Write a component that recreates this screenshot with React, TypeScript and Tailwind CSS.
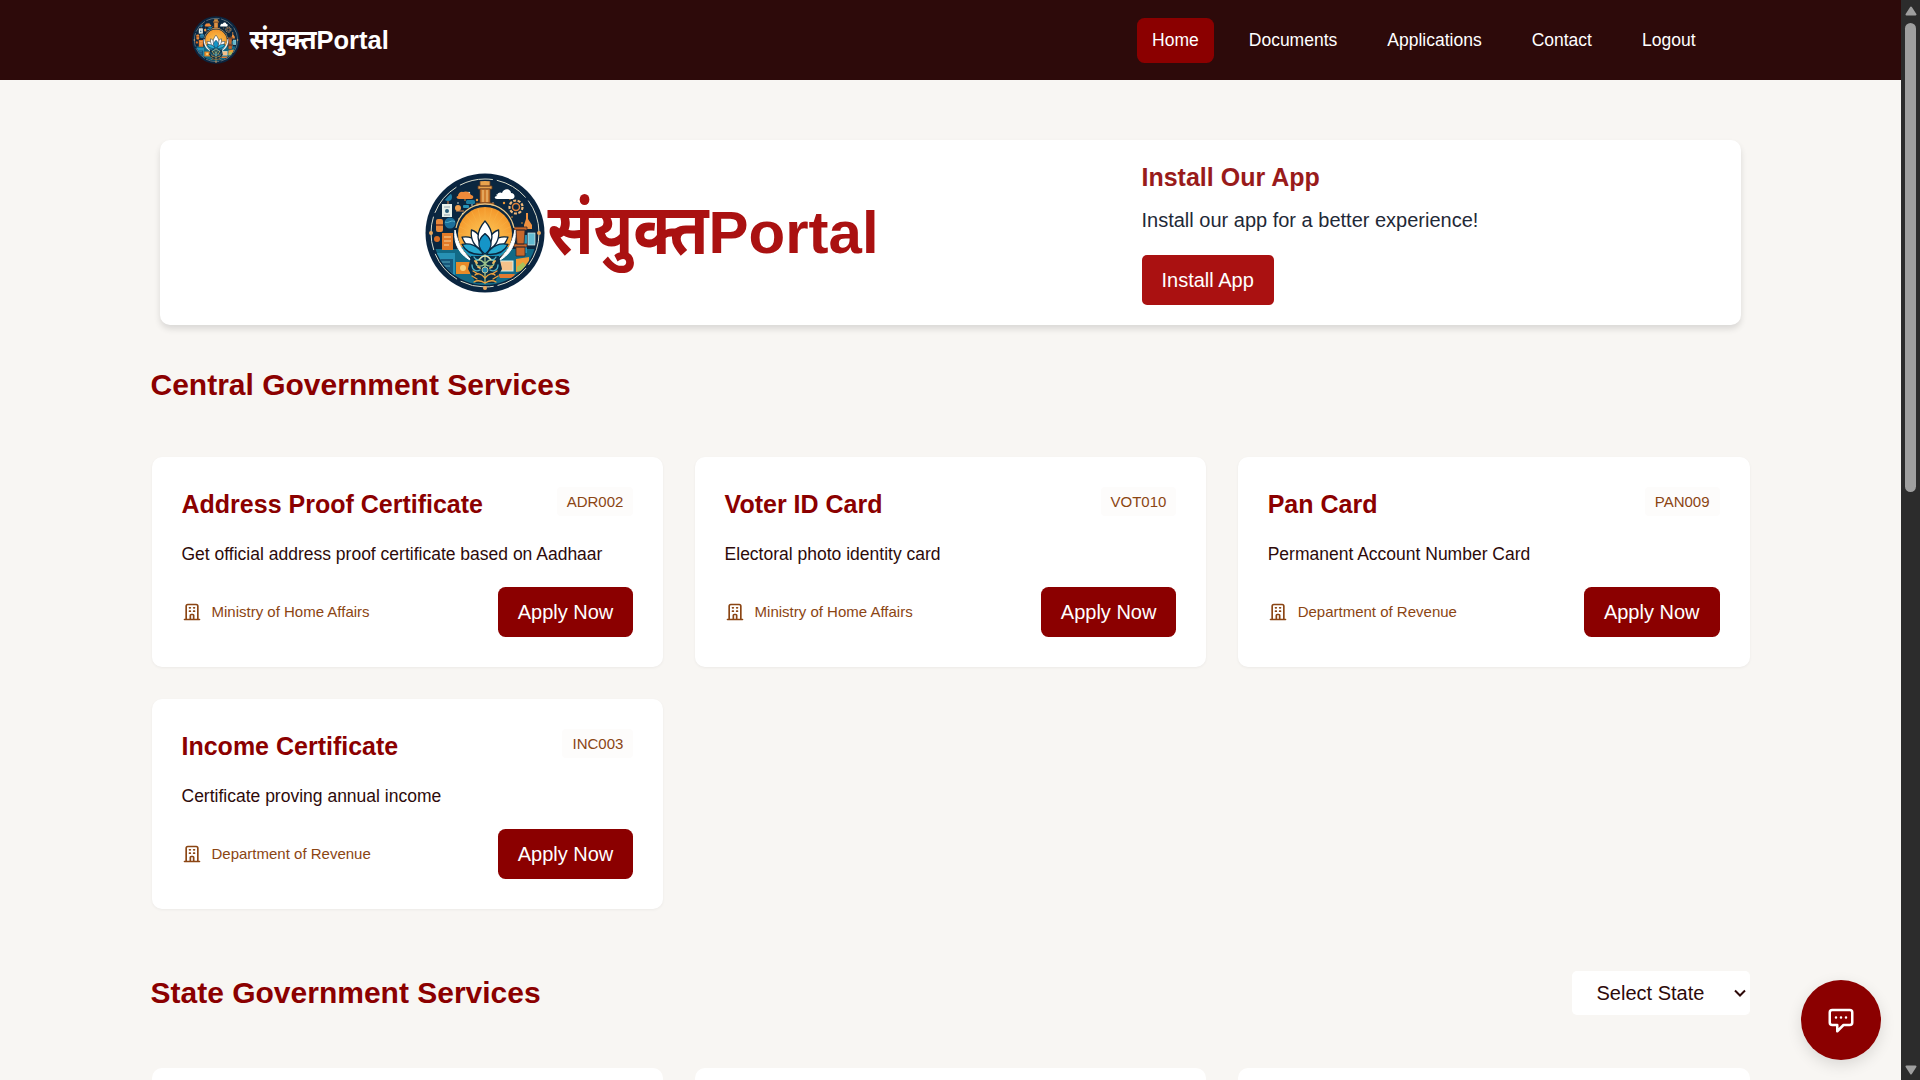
import React from "react";

const FONT = { fontFamily: '"Liberation Sans", "Noto Sans", "Noto Sans Devanagari", sans-serif' };

function Emblem({ size }: { size: number }) {
  const stars = [
    [44, 20], [40, 27], [72, 22], [79, 30], [47, 32], [76, 36], [38, 41], [85, 26], [68, 30], [52, 27], [33, 30], [87, 44], [24, 42], [97, 50], [34, 46], [82, 18],
  ];
  return (
    <svg width={size} height={size} viewBox="0 0 120 120" className="block shrink-0">
      <defs>
        <clipPath id="disc"><circle cx="60" cy="60" r="52" /></clipPath>
        <clipPath id="sun"><circle cx="60" cy="61" r="27" /></clipPath>
        <radialGradient id="glow" cx="0.5" cy="0.6" r="0.7">
          <stop offset="0" stopColor="#ffd060" />
          <stop offset="1" stopColor="#f08418" />
        </radialGradient>
      </defs>
      <circle cx="60" cy="60" r="59.5" fill="#0a2540" />
      <circle cx="60" cy="60" r="54" fill="none" stroke="#d9dccb" strokeWidth="1" strokeDasharray="34 4" />
      <g clipPath="url(#disc)">
        <rect width="120" height="120" fill="#0b2740" />
        <rect y="76" width="120" height="50" fill="#126a86" />
        <path d="M12 80h18v22H12zM92 62h10v18H92z" fill="#2791b4" />
        {stars.map(([x, y], i) => (
          <circle key={i} cx={x} cy={y} r={i % 3 === 0 ? 1.2 : 0.8} fill={i % 2 ? "#f39a35" : "#d8e7de"} />
        ))}
        <path d="M33 23a4 4 0 0 1 5-4 6 6 0 0 1 8 3c3 0 3 4 0 4H34c-3 0-3-3-1-3z" fill="#f08a3a" />
        <path d="M72 23c0-4 4-4 5-3 2-6 9-4 9 0 4 0 5 5 1 6H72c-3 0-3-3 0-3z" fill="#fff" />
        <circle cx="23" cy="24" r="4" fill="#1f7ea6" />
        <path d="M23 28v7M31 38h8" stroke="#d9894d" strokeWidth="1" />
        <rect x="17" y="31" width="10" height="13" fill="#e9f1ea" />
        <circle cx="22" cy="38" r="2" fill="#2b5f7b" />
        <path d="M19 34h6M19 42h6" stroke="#7c93a0" strokeWidth="0.8" />
        <rect x="41" y="27" width="9" height="4" rx="1.5" fill="#1d7ea2" />
        <rect x="38" y="32" width="6" height="3" rx="1" fill="#2894b8" />
        <circle cx="33" cy="35" r="3" fill="#f0a04e" />
        <circle cx="91" cy="34" r="6.5" fill="none" stroke="#f0b878" strokeWidth="2.2" strokeDasharray="3 1.5" />
        <circle cx="91" cy="34" r="3.5" fill="#0b2740" stroke="#e1823a" strokeWidth="1.5" />
        <rect x="11" y="46" width="7" height="13" rx="2" fill="#e9883a" />
        <rect x="11" y="51" width="7" height="2" fill="#9b4b20" />
        <circle cx="25" cy="50" r="5.5" fill="#1d6f9a" />
        <path d="M20 49c4 2 6-3 10 0" fill="none" stroke="#56b4ce" strokeWidth="1" />
        <circle cx="12" cy="66" r="3" fill="#d96b22" />
        <rect x="17" y="60" width="11" height="17" fill="#e37a28" />
        <path d="M19 64h7M19 68h7M19 72h5" stroke="#fbd49a" strokeWidth="1" />
        <path d="M103 40v6l4 6v4h-8v-4l2-6v-6z" fill="#ef9140" />
        <path d="M89 54h13v3H89zM91 57h9l-1 14h-7zM89 71h13v3H89zM91 74h9v9h-9z" fill="#c8682b" stroke="#3a2b2c" strokeWidth="0.8" />
        <rect x="103" y="60" width="7" height="12" fill="#63bcd3" stroke="#d9e8e3" strokeWidth="0.7" />
        <rect x="31" y="89" width="14" height="12" fill="#e88b28" />
        <circle cx="38" cy="95" r="3" fill="#f5d17b" />
        <path d="M14 86h14v16H14z" fill="#17577b" />
        <path d="M17 89h8M17 93h8" stroke="#58a9bd" strokeWidth="1" />
        <rect x="75" y="88" width="13" height="10" fill="#f5c18a" stroke="#d9efe8" strokeWidth="1" />
        <path d="M73 101h17l-2 4H75z" fill="#e27a30" />
        <path d="m91 86 13-2v13l-13 2z" fill="#f19b35" />
        <path d="m92 94 6-5 5 6v2l-11 1z" fill="#a9c15b" />
        <path d="M58 3h4v4h-4zM55 7h10v6H55zM53 13h14v3H53z" fill="#e8a24d" stroke="#6a3c20" strokeWidth="0.8" />
        <path d="M55 16h10v14H55zM51 30h18v4H51z" fill="#cf7d30" stroke="#6a3c20" strokeWidth="0.8" />
        <path d="M58 17v12M62 17v12" stroke="#f7cf86" strokeWidth="1" />
      </g>
      <circle cx="60" cy="61" r="29.500" fill="#0b2740" />
      <path d="M30 57c-2 15 6 26 17 31-8-8-14-16-17-31zM90 57c2 15-6 26-17 31 8-8 14-16 17-31z" fill="#fff" stroke="#fff" strokeWidth="1" />
      <path d="M31 55a29.500 29.500 0 0 1 58 0" fill="none" stroke="#e9c88a" strokeWidth="1.200" />
      <g clipPath="url(#sun)">
        <rect x="30" y="30" width="60" height="60" fill="url(#glow)" />
        {Array.from({ length: 15 }, (_, i) => {
          const a = Math.PI * (1 + i / 14);
          return <path key={i} d={`M60 66L${60 + Math.cos(a) * 32} ${66 + Math.sin(a) * 32}`} stroke="#f8b044" strokeWidth="0.6" />;
        })}
        <path d="M30 74h60v20H30z" fill="#1993bd" />
      </g>
      <g stroke="#0b2740" strokeWidth="1.5" strokeLinejoin="round" transform="translate(9 7.500) scale(0.850 0.900)">
        <path d="M59 78c-13 1-22-5-26-15 6-1 12 0 16 4z" fill="#fff" />
        <path d="M61 78c13 1 22-5 26-15-6-1-12 0-16 4z" fill="#fff" />
        <path d="M58 78c-13-5-15-14-14-23 7 2 13 7 14 23z" fill="#fff" />
        <path d="M62 78c13-5 15-14 14-23-7 2-13 7-14 23z" fill="#fff" />
        <path d="M60 78c-13-12-9-23 0-33 9 10 13 21 0 33z" fill="#fff" />
        <path d="M60 82c-10-8-9-16 0-23 9 7 10 15 0 23z" fill="#1595c8" />
        <path d="M58 82c-12 1-21-3-25-11 9-2 19 1 25 11z" fill="#28aad1" />
        <path d="M62 82c12 1 21-3 25-11-9-2-19 1-25 11z" fill="#28aad1" />
      </g>
      <path d="M46 83h28l3 13-8 14H51l-8-14z" fill="#0b2f47" />
      <g fill="none" strokeWidth="1.300" strokeLinecap="round">
        <path d="M60 82v28M60 91c-5-6-9-5-9-1 0 4 6 4 9 1M60 91c5-6 9-5 9-1 0 4-6 4-9 1" stroke="#9cc28a" />
        <path d="M49 84c2 4 5 3 7 1M71 84c-2 4-5 3-7 1M47 92c0 5 4 7 8 5M73 92c0 5-4 7-8 5" stroke="#4fb3c9" />
        <path d="M60 105c-4-5-8-5-10-3M60 105c4-5 8-5 10-3M60 110c-5-3-8-3-11-1M60 110c5-3 8-3 11-1M48 98l5 3M72 98l-5 3M47 103l5 3M73 103l-5 3" stroke="#eda23f" />
        <path d="M50 88l2 2M70 88l-2 2M53 94l2 1M67 94l-2 1" stroke="#f3b75a" strokeWidth="1.800" />
        <path d="M54 87c2-3 4-4 6-4s4 1 6 4" stroke="#e9e2b0" />
      </g>
      <circle cx="60" cy="97" r="3" fill="#2689b0" stroke="#e5d79a" strokeWidth="0.8" />
      <g fill="#e8a45a">
        <circle cx="6" cy="60" r="2" /><circle cx="114" cy="60" r="2" /><circle cx="60" cy="115" r="2" />
      </g>
    </svg>
  );
}

function LineIcon({ size, d }: { size: number; d: string }) {
  return (
    <svg width={size} height={size} viewBox="0 0 24 24" fill="none" stroke="currentColor" strokeWidth="2" strokeLinecap="round" strokeLinejoin="round" className="block shrink-0">
      <path d={d} />
    </svg>
  );
}

const BUILDING = "M19 21V5a2 2 0 0 0-2-2H7a2 2 0 0 0-2 2v16m14 0h2m-2 0h-5m-9 0H3m2 0h5M9 7h1m-1 4h1m4-4h1m-1 4h1m-5 10v-5a1 1 0 0 1 1-1h2a1 1 0 0 1 1 1v5m-4 0h4";
const CHAT = "M8 10h.01M12 10h.01M16 10h.01M9 16H5a2 2 0 0 1-2-2V6a2 2 0 0 1 2-2h14a2 2 0 0 1 2 2v8a2 2 0 0 1-2 2h-5l-5 5v-5z";

const central = [
  { title: "Address Proof Certificate", code: "ADR002", text: "Get official address proof certificate based on Aadhaar", dept: "Ministry of Home Affairs" },
  { title: "Voter ID Card", code: "VOT010", text: "Electoral photo identity card", dept: "Ministry of Home Affairs" },
  { title: "Pan Card", code: "PAN009", text: "Permanent Account Number Card", dept: "Department of Revenue" },
  { title: "Income Certificate", code: "INC003", text: "Certificate proving annual income", dept: "Department of Revenue" },
];

function ServiceCard({ title, code, text, dept }: (typeof central)[number]) {
  return (
    <article className="h-[210px] rounded-[10px] bg-white px-[30px] pt-[30px] shadow-[0_1px_3px_rgba(0,0,0,0.05)]">
      <div className="flex items-start justify-between">
        <h3 className="text-[25px] leading-[35px] font-bold text-[#8b0000]">{title}</h3>
        <span className="rounded-[4px] bg-[#fdfcfb] px-[10px] text-[15px] leading-[29px] text-[#8b4513]">{code}</span>
      </div>
      <p className="mt-[18px] text-[17.5px] leading-[28px] text-[#2d0a0a]">{text}</p>
      <div className="mt-[19px] flex items-center justify-between">
        <div className="flex items-center gap-[10px] text-[15px] text-[#8b4513]">
          <LineIcon size={20} d={BUILDING} />
          <span>{dept}</span>
        </div>
        <button className="h-[50px] rounded-[7.5px] bg-[#8b0000] px-[20px] text-[20px] text-white">Apply Now</button>
      </div>
    </article>
  );
}

const links = ["Home", "Documents", "Applications", "Contact", "Logout"];

export default function App() {
  return (
    <div className="flex h-[1080px] w-[1920px] overflow-hidden bg-[#f8f6f3]" style={FONT}>
      <div className="relative h-full w-[1901px] overflow-hidden">
        <header className="h-20 bg-[#2d0a0a]">
          <div className="mx-auto flex h-full w-[1520px] items-center justify-between pl-px">
            <div className="flex items-center gap-[10px] text-[25.5px] font-bold text-white">
              <Emblem size={48} />
              <span className="flex items-baseline pt-px">
                <span className="origin-[0_78%] scale-y-107 text-[26px] leading-none">संयुक्त</span>
                <span>Portal</span>
              </span>
            </div>
            <nav className="flex gap-5">
              {links.map((link, i) => (
                <a key={link} className={`rounded-[7.5px] px-[15px] text-[17.5px] leading-[45px] font-medium text-white ${i === 0 ? "bg-[#8b0000]" : ""}`}>{link}</a>
              ))}
            </nav>
          </div>
        </header>

        <section className="mx-40 mt-[60px] flex h-[185px] rounded-[10px] bg-white shadow-[0_4px_6px_rgba(0,0,0,0.12)]">
          <div className="ml-[264.5px] flex w-[717px] items-center">
            <Emblem size={120} />
            <span className="ml-[3px] flex items-baseline pb-[3px] text-[60px] leading-none font-bold text-[#aa1111]">
              <span className="origin-[0_78%] scale-y-112 text-[62.5px] leading-none">संयुक्त</span>
              <span>Portal</span>
            </span>
          </div>
          <div className="pt-[19px]">
            <h2 className="text-[25px] leading-[36px] font-bold text-[#991b1b]">Install Our App</h2>
            <p className="mt-[10px] text-[20px] leading-[30px] text-[#1f2937]">Install our app for a better experience!</p>
            <button className="mt-[20px] h-[50px] rounded-[5px] bg-[#aa1111] px-[20px] text-[20px] text-white">Install App</button>
          </div>
        </section>

        <main className="mx-auto w-[1600px]">
          <h2 className="mt-[37px] text-[30px] leading-[45px] font-bold text-[#8b0000]">Central Government Services</h2>
          <div className="mx-px mt-[50px] grid grid-cols-3 gap-x-[31.25px] gap-y-8">
            {central.map((s) => <ServiceCard key={s.code} {...s} />)}
          </div>
          <div className="mt-[61px] flex h-[45px] items-center justify-between">
            <h2 className="text-[30px] font-bold text-[#8b0000]">State Government Services</h2>
            <div className="mr-px flex h-[44px] w-[178px] items-center justify-between rounded-[5px] bg-white pr-[4px] pl-[25px] text-[20px] text-[#2d0a0a]">
              <span>Select State</span>
              <svg width="12" height="8" viewBox="0 0 12 8" fill="none" stroke="currentColor" strokeWidth="2"><path d="m1 1.500 5 5 5-5" /></svg>
            </div>
          </div>
          <div className="mx-px mt-[53px] grid grid-cols-3 gap-x-[31.25px]">
            {[0, 1, 2].map((i) => <div key={i} className="h-[210px] rounded-[10px] bg-white" />)}
          </div>
        </main>

        <button className="absolute right-[20px] bottom-[20px] flex size-20 items-center justify-center rounded-full bg-[#8b0000] text-white shadow-[0_5px_15px_rgba(0,0,0,0.12)]">
          <LineIcon size={30} d={CHAT} />
        </button>
      </div>

      <aside className="flex h-full w-[19px] flex-col items-center justify-between bg-[#2c2c2c]">
        <div className="flex flex-col items-center">
          <svg width="12" height="10" viewBox="0 0 12 10" className="mt-[6px]"><path d="M6 1.500 10.500 8.500h-9z" fill="#9f9f9f" stroke="#9f9f9f" strokeWidth="2" strokeLinejoin="round" /></svg>
          <div className="mt-[7px] h-[469px] w-[11px] rounded-full bg-[#9f9f9f]" />
        </div>
        <svg width="12" height="10" viewBox="0 0 12 10" className="mb-[5px]"><path d="M6 8.500 10.500 1.500h-9z" fill="#9f9f9f" stroke="#9f9f9f" strokeWidth="2" strokeLinejoin="round" /></svg>
      </aside>
    </div>
  );
}
